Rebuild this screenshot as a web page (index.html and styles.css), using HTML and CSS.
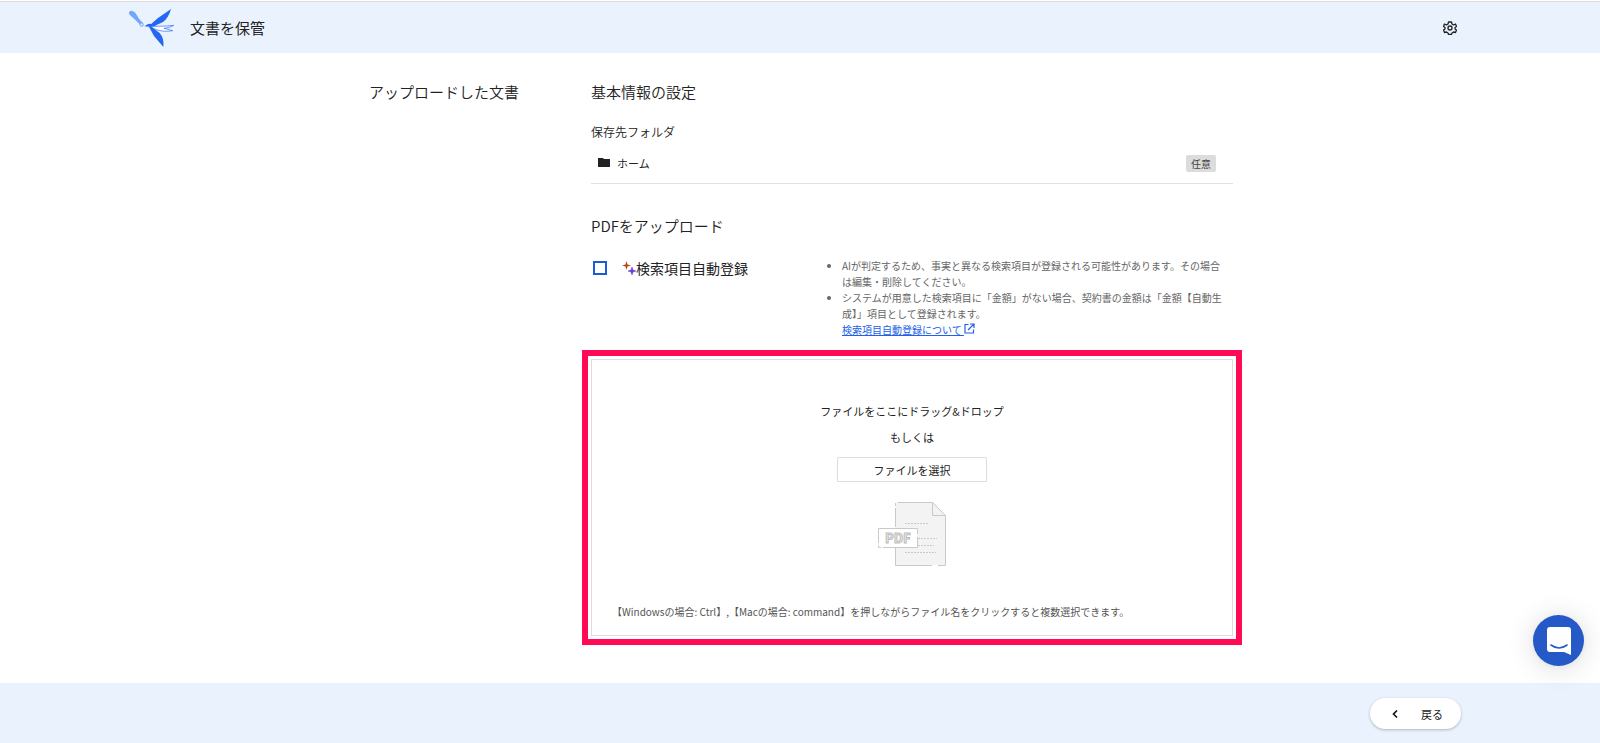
FILE: index.html
```html
<!DOCTYPE html>
<html lang="ja">
<head>
  <meta charset="UTF-8">
  <meta name="viewport" content="width=device-width, initial-scale=1.0">
  <title>文書を保管</title>
  <link rel="stylesheet" href="styles.css">
</head>
<body>
  <header class="header">
    <div class="header-inner">
      <a class="logo" href="#" aria-label="ホーム">
        <svg width="48" height="40" viewBox="82 24 144 120">
          <path d="M86 35c5-5 13-3 19 5l10 16c4 6 9 9 12 12l-7 8c-5-6-10-10-15-15L91 48c-5-4-8-9-5-13z" fill="#74a7fa"/>
          <circle cx="123" cy="74" r="5" fill="#d8e7fe" stroke="#74a7fa" stroke-width="3"/>
          <path d="M131 79l10-6c4-2 8-2 12 0l14 1c-4 4-10 6-15 7z" fill="#2468f2"/>
          <path d="M147 76L172 54 211 27C207 42 199 57 187 66L163 77z" fill="#2468f2"/>
          <path d="M150 81c18-4 44-1 69-5-10 6-20 8-29 9l26 7c-20 4-44 2-66-11z" fill="#fff" stroke="#2468f2" stroke-width="2"/>
          <path d="M144 79L160 108 188 141C190 124 187 110 177 99L154 82z" fill="#2468f2"/>
        </svg>
      </a>
      <h1>文書を保管</h1>
      <button class="icon-button" type="button" aria-label="設定">
        <svg width="14" height="14" viewBox="0 0 28 28" fill="none" stroke="#222" stroke-width="2.6" stroke-linejoin="round">
          <path d="M11 2h6l1 4 3 2 4-2 2 5-3 2v3l3 2-2 5-4-1-3 2-1 3h-6l-1-3-3-2-4 1-2-5 3-2v-3l-3-2 2-5 4 2 3-2z"/>
          <circle cx="14" cy="14" r="4"/>
        </svg>
      </button>
    </div>
  </header>

  <main class="main">
    <aside>
      <h2>アップロードした文書</h2>
    </aside>
    <div class="content">
      <section>
        <h2>基本情報の設定</h2>
        <h3>保存先フォルダ</h3>
        <div class="folder">
          <svg width="12" height="10" viewBox="0 0 12 10"><path d="M0 0h5l1 1h6v8H0z" fill="#222"/></svg>
          <span>ホーム</span>
          <span class="badge">任意</span>
        </div>
      </section>

      <section>
        <h2>PDFをアップロード</h2>
        <div class="auto-register">
          <label class="check">
            <input type="checkbox">
            <svg width="14" height="14" viewBox="0 0 28 28">
              <path d="M9 0l2 7 7 2-7 2-2 7-2-7-7-2 7-2z" fill="#c2410c"/>
              <path d="M20 12l2 6 6 2-6 2-2 6-2-6-6-2 6-2z" fill="#6d38dc" stroke="#6d38dc"/>
            </svg>
            <span>検索項目自動登録</span>
          </label>
          <ul class="notes">
            <li>AIが判定するため、事実と異なる検索項目が登録される可能性があります。その場合は編集・削除してください。</li>
            <li>システムが用意した検索項目に「金額」がない場合、契約書の金額は「金額【自動生成】」項目として登録されます。<br>
              <a href="#">検索項目自動登録について <svg width="11" height="11" viewBox="0 0 22 22" fill="none" stroke="#2160e8" stroke-width="2.4"><path d="M9 3H2v17h17v-7M12 2h8v8M20 2L8 14"/></svg></a></li>
          </ul>
        </div>

        <div class="dropzone">
          <p>ファイルをここにドラッグ&amp;ドロップ</p>
          <p>もしくは</p>
          <button class="select-button" type="button">ファイルを選択</button>
          <svg class="pdf-icon" width="70" height="66" viewBox="0 0 70 66" fill="none" stroke="#c9c9c9">
            <path d="M19 1h37l13 14v49H19z" fill="#f3f3f3" stroke="none"/>
            <path d="M18.500 7v19M21 1.500h34.500l13 13V64.500H61M55 64.500H18.500V47M18.500 5V2M55.500 1.500v13h13"/>
            <path d="M28 22.500h24M41 37.500h19M41 44.500h16M28 51.500h31" stroke-dasharray="2 1"/>
            <path d="M1 28h39v18H1z" fill="#fff" stroke="none"/>
            <path d="M1.500 42V27.500h39V33M40.500 36v10.500H6M4 46.500H1.500V44"/>
            <text x="8" y="42" class="pdf-text">PDF</text>
          </svg>
          <p class="hint">【Windowsの場合: Ctrl】,【Macの場合: command】を押しながらファイル名をクリックすると複数選択できます。</p>
        </div>
      </section>
    </div>
  </main>

  <footer class="footer">
    <button class="back-button" type="button">
      <svg width="6" height="8" viewBox="0 0 6 8" fill="none" stroke="#111" stroke-width="1.600"><path d="M5 0.500L1.500 4 5 7.500"/></svg>
      <span>戻る</span>
    </button>
  </footer>

  <button class="chat" type="button" aria-label="チャット">
    <svg width="26" height="30" viewBox="0 0 26 30">
      <path d="M4 1h18q3 0 3 3v25l-7-3H4q-3 0-3-3V4q0-3 3-3z" fill="#fff"/>
      <path d="M5 19q8 6 16 0" fill="none" stroke="#2459c7" stroke-width="1.600" stroke-linecap="round"/>
    </svg>
  </button>
</body>
</html>
```
FILE: styles.css
```css
* {
  box-sizing: border-box;
}
body {
  display: flex;
  flex-direction: column;
  min-height: 100vh;
  margin: 0;
  padding-top: 1px;
  font-family: "Noto Sans CJK JP", sans-serif;
  font-size: 11px;
  color: #222;
  background-color: #fff;
}
h1, h2, h3, p {
  margin: 0;
  font-weight: 400;
}
button {
  font-family: inherit;
  color: inherit;
  cursor: pointer;
}
svg {
  display: block;
}
.header {
  border-top: 1px solid #ddd;
  background-color: #eaf2fe;
}
.header-inner {
  display: flex;
  align-items: center;
  max-width: 1344px;
  height: 51px;
  margin: 0 auto;
}
.header h1 {
  margin-left: 14px;
  font-size: 15px;
  line-height: 22px;
}
.icon-button {
  margin-left: auto;
  margin-right: 15px;
  padding: 0;
  border: none;
  background: none;
}
.main {
  display: grid;
  grid-template-columns: 224px 1fr;
  flex: 1;
  width: 100%;
  max-width: 866px;
  margin: 0 auto;
  padding: 28px 0 47px;
}
aside {
  padding-left: 2px;
}
h2 {
  font-size: 15px;
  font-weight: 350;
  line-height: 22px;
}
h3 {
  margin-top: 20px;
  font-size: 12px;
  font-weight: 350;
  line-height: 18px;
}
.folder {
  display: flex;
  align-items: center;
  height: 43px;
  padding: 2px 17px 0 7px;
  margin-bottom: 31px;
  border-bottom: 1px solid #e2e2e2;
}
.folder span {
  margin-left: 7px;
  line-height: 16px;
}
.folder .badge {
  margin-left: auto;
  padding: 0 5px;
  border-radius: 2px;
  background-color: #dcdcdc;
  font-size: 10px;
  line-height: 17px;
  color: #444;
}
.auto-register {
  display: flex;
  justify-content: space-between;
  align-items: flex-start;
  margin: 21px 0;
}
.check {
  display: flex;
  align-items: center;
  height: 20px;
  font-size: 14px;
}
.check input {
  appearance: none;
  width: 14px;
  height: 14px;
  margin: 0 15px 0 2px;
  border: 2px solid #1c5bd8;
}
.check input:checked {
  background-color: #1c5bd8;
}
.notes {
  width: 408px;
  margin: 0;
  padding: 0 4px 0 17px;
  font-size: 10px;
  line-height: 16px;
  color: #666;
}
.notes a {
  color: #2160e8;
}
.notes svg {
  display: inline-block;
}
.dropzone {
  display: flex;
  flex-direction: column;
  align-items: center;
  padding: 43px 20px 15px;
  border: 1px solid #ddd;
  outline: 6px solid #ff0a54;
  outline-offset: 3px;
}
.dropzone p {
  margin-bottom: 10px;
  line-height: 16px;
}
.select-button {
  width: 150px;
  height: 25px;
  margin-top: 2px;
  padding: 0;
  border: 1px solid #ddd;
  border-radius: 1px;
  background-color: #fff;
  font-size: 11px;
}
.pdf-icon {
  margin: 19px 0 37px;
}
.pdf-text {
  font-size: 13px;
  font-weight: 700;
  fill: #f3f3f3;
  stroke: #bbb;
}
.dropzone .hint {
  align-self: flex-start;
  margin-bottom: 0;
  font-size: 10px;
  color: #555;
}
.footer {
  display: flex;
  justify-content: flex-end;
  width: 100%;
  height: 60px;
  padding: 15px max(16px, calc(50% - 661px));
  background-color: #eaf2fe;
}
.back-button {
  display: flex;
  align-items: center;
  justify-content: space-between;
  width: 91px;
  height: 31px;
  padding: 0 18px 0 22px;
  border: none;
  border-radius: 16px;
  background-color: #fff;
  box-shadow: 0 1px 3px rgba(0, 0, 0, 0.25);
  font-size: 11px;
}
/* chat launcher floats over the page */
.chat {
  position: fixed;
  right: 16px;
  bottom: 77px;
  display: flex;
  align-items: center;
  justify-content: center;
  width: 51px;
  height: 51px;
  padding: 0;
  border: none;
  border-radius: 50%;
  background-color: #2459c7;
  box-shadow: 0 1px 6px rgba(0, 0, 0, 0.06), 0 2px 28px rgba(0, 0, 0, 0.14);
}
```
